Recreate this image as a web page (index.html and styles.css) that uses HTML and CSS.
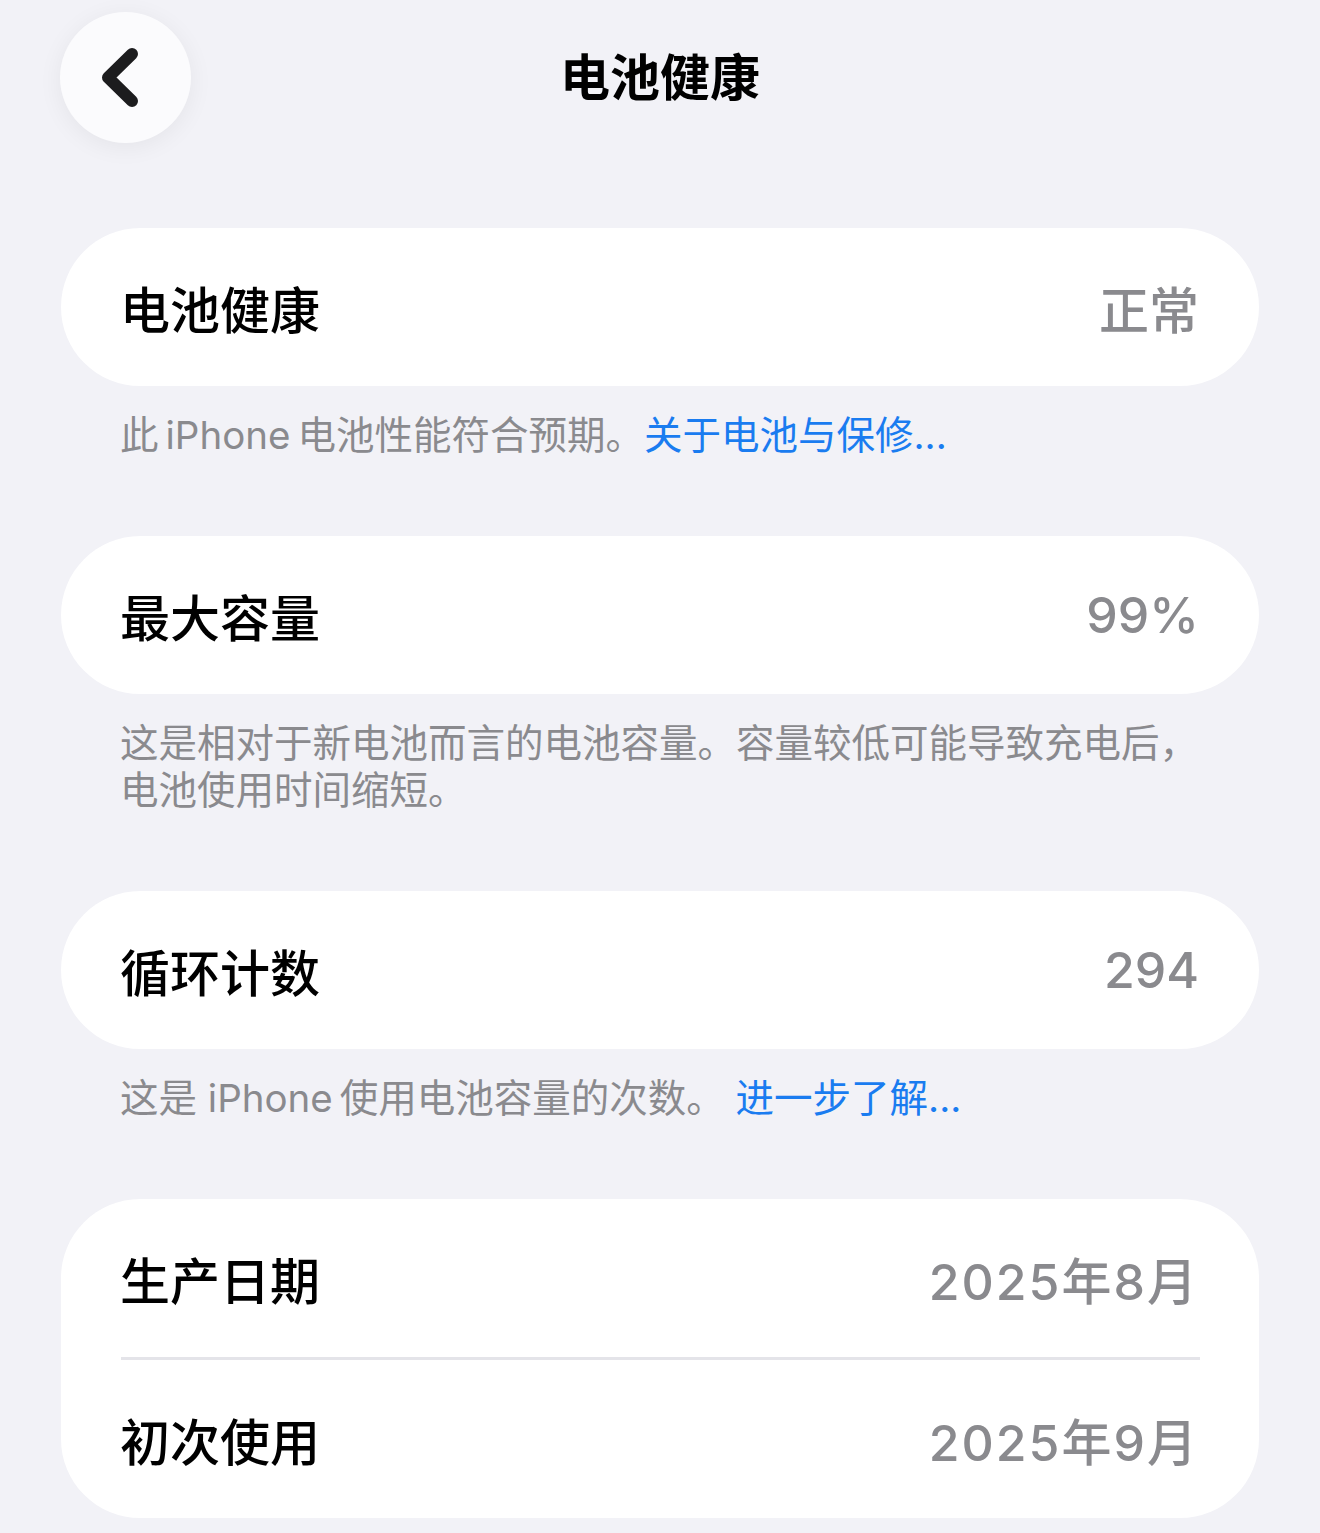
FILE: index.html
```html
<!DOCTYPE html>
<html lang="zh-CN">
<head>
    <meta charset="UTF-8">
    <meta name="viewport" content="width=device-width, initial-scale=1.0">
    <title>电池健康</title>
    <link rel="stylesheet" href="styles.css">
</head>
<body>
    <header class="nav">
        <button class="back" aria-label="返回">
            <svg viewBox="0 0 131 131" width="131" height="131">
                <polyline points="72,42 48,65.5 72,89" fill="none" stroke="#1c1c1e" stroke-width="12" stroke-linecap="round" stroke-linejoin="round"/>
            </svg>
        </button>
        <h1 class="nav-title">电池健康</h1>
        <div></div>
    </header>

    <main class="content">
        <section class="group">
            <div class="card">
                <div class="row">
                    <span class="row-label">电池健康</span>
                    <span class="row-value">正常</span>
                </div>
            </div>
            <p class="footer">此&thinsp;iPhone&thinsp;电池性能符合预期。<a href="#">关于电池与保修...</a></p>
        </section>

        <section class="group">
            <div class="card">
                <div class="row">
                    <span class="row-label">最大容量</span>
                    <span class="row-value">99%</span>
                </div>
            </div>
            <p class="footer">这是相对于新电池而言的电池容量。容量较低可能导致充电后，电池使用时间缩短。</p>
        </section>

        <section class="group">
            <div class="card">
                <div class="row">
                    <span class="row-label">循环计数</span>
                    <span class="row-value">294</span>
                </div>
            </div>
            <p class="footer">这是 iPhone&thinsp;使用电池容量的次数。 <a href="#">进一步了解...</a></p>
        </section>

        <section class="group">
            <div class="card">
                <div class="row">
                    <span class="row-label">生产日期</span>
                    <span class="row-value date">2025年8月</span>
                </div>
                <div class="divider"></div>
                <div class="row">
                    <span class="row-label">初次使用</span>
                    <span class="row-value date">2025年9月</span>
                </div>
            </div>
        </section>
    </main>
</body>
</html>
```

FILE: styles.css
```css
body {
    margin: 0;
    background-color: #f2f2f7;
    font-family: Inter, "Noto Sans CJK SC", sans-serif;
    color: #000;
}
.nav {
    display: grid;
    grid-template-columns: 1fr auto 1fr;
    align-items: center;
    padding: 12px 60px 0;
}
.back {
    width: 131px;
    height: 131px;
    padding: 0;
    border: none;
    border-radius: 50%;
    background-color: #fbfbfd;
    box-shadow: 0 4px 24px rgba(0, 0, 0, 0.06);
    cursor: pointer;
}
.back svg {
    display: block;
}
.nav-title {
    margin: 0;
    font-size: 50px;
    font-weight: 700;
    line-height: 1;
}
.content {
    padding: 85px 61px 0;
}
.group {
    margin-bottom: 77px;
}
.card {
    background-color: #fff;
    border-radius: 79px;
    padding: 0 60px 0 59px;
}
.row {
    height: 158px;
    display: flex;
    align-items: center;
    justify-content: space-between;
}
.row-label {
    font-size: 50px;
    font-weight: 500;
}
.row-value {
    font-size: 50px;
    font-weight: 500;
    color: #8a8a8e;
}
.row-value.date {
    letter-spacing: 2px;
}
.divider {
    height: 3px;
    background-color: #e4e4e9;
    margin: 0 -1px 0 1px;
}
.footer {
    margin: 0;
    padding: 26px 30px 0 59px;
    font-size: 38.5px;
    line-height: 47px;
    color: #8a8a8e;
}
.footer a {
    color: #1a7cf0;
    text-decoration: none;
}
```
